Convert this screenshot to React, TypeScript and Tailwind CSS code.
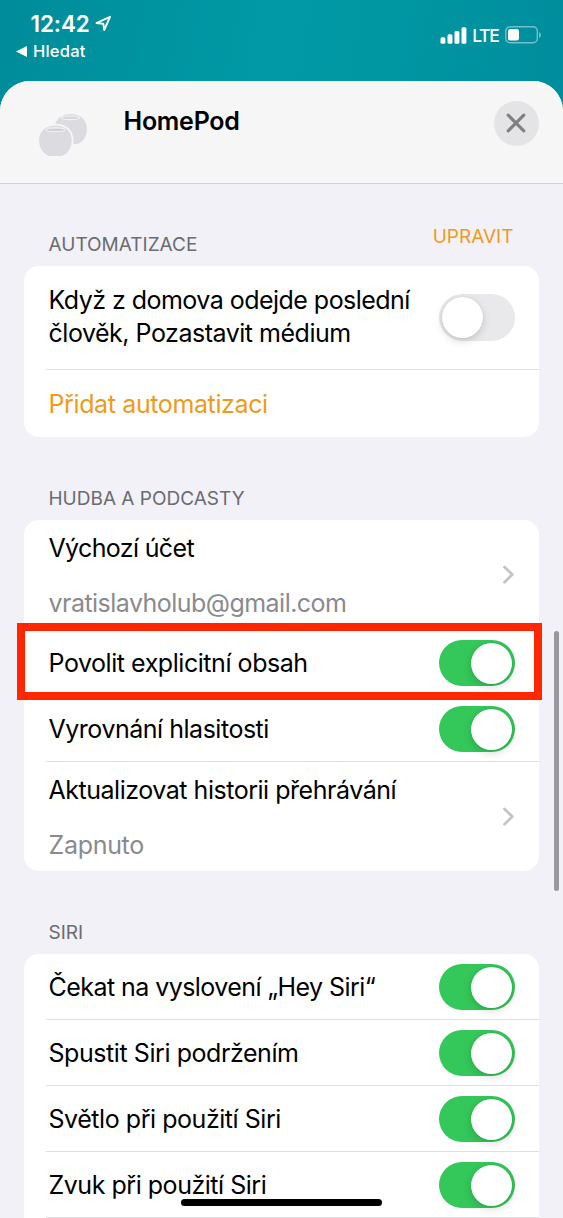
import type { ReactNode } from 'react'

function Toggle({ on }: { on: boolean }) {
  return (
    <div
      role="switch"
      aria-checked={on}
      className={
        on
          ? 'flex h-[46.5px] w-[76.5px] shrink-0 items-center justify-end rounded-full bg-[#34c759] px-[3px]'
          : 'flex h-[46.5px] w-[76.5px] shrink-0 items-center justify-start rounded-full bg-[#e9e9eb] px-[3px]'
      }
    >
      <div className="size-[41px] rounded-full bg-white shadow-[0_3px_8px_rgba(0,0,0,0.15),0_0_2px_rgba(0,0,0,0.1)]" />
    </div>
  )
}

function Chevron() {
  return (
    <svg className="shrink-0" width="12" height="20" viewBox="0 0 12 20" fill="none">
      <path d="M1.500 2 9.300 9.600 1.500 17.200" stroke="#c4c4c7" strokeWidth="2.800" strokeLinecap="round" strokeLinejoin="round" />
    </svg>
  )
}

function SwitchRow({ label, on = true }: { label: ReactNode; on?: boolean }) {
  return (
    <div className="ml-[22px] flex h-[66px] items-center justify-between border-b border-[#dfdfe2] pt-px pr-6 pl-[2.500px]">
      {label}
      <Toggle on={on} />
    </div>
  )
}

function DetailRow({ title, value }: { title: ReactNode; value: ReactNode }) {
  return (
    <div className="flex h-[109px] items-center justify-between pr-6 pl-[24.500px]">
      <div className="flex flex-col gap-[22px] pt-[2px]">
        {title}
        {value}
      </div>
      <Chevron />
    </div>
  )
}

function HomePodIcon() {
  return (
    <svg width="50" height="45" viewBox="0 0 50 45">
      <path d="M31.800 1C41 1 48 6.300 48 16c0 6.200-2.900 11.200-7.200 13.900C39.400 30.800 37.500 31 35 31h-7c-2.500 0-4.200-.3-5.500-1.100-4.200-2.700-7-7.700-7-13.900C15.500 6.300 22.500 1 31.800 1Z" fill="#dcdce0" />
      <ellipse cx="31.500" cy="4.800" rx="9" ry="1.800" fill="#d6d6db" stroke="#f3f3f5" strokeWidth="1.100" />
      <path d="M16.400 12.600c9.500 0 16.300 5.200 16.300 15 0 6.300-2.800 11.300-7.200 14.200-1.300.9-3 1.200-5.300 1.200h-7.600c-2.300 0-4-.3-5.300-1.200C2.900 38.900.1 33.900.1 27.600c0-9.800 6.800-15 16.300-15Z" fill="#dcdce0" stroke="#f6f6f7" strokeWidth="3.600" paintOrder="stroke" />
      <ellipse cx="16.400" cy="16.800" rx="9.300" ry="1.900" fill="#d0d0d6" stroke="#f3f3f5" strokeWidth="1.100" />
    </svg>
  )
}

function StatusBar() {
  return (
    <div className="flex h-[81px] items-start justify-between pr-[21px] pl-4 text-white">
      <div className="flex flex-col">
        <div className="mt-[9px] flex h-7 items-center pl-[14.500px]">
          <span className="text-[22.500px] font-semibold tracking-[-0.100px]">12:42</span>
          <svg className="ml-[5px]" width="17" height="17" viewBox="0 0 17 17" fill="none">
            <path d="M1.500 8 15 1.800 9.200 15 8.300 8.700Z" stroke="#fff" strokeWidth="1.900" strokeLinejoin="round" />
          </svg>
        </div>
        <div className="mt-px flex h-[26px] items-center">
          <svg width="11" height="11" viewBox="0 0 11 11">
            <path d="M0 5.500 11 0v11Z" fill="#fff" />
          </svg>
          <span className="ml-[6px] text-[16.500px] font-medium tracking-[0.200px]">Hledat</span>
        </div>
      </div>
      <div className="mt-[23px] flex h-6 items-center">
        <svg width="27" height="17" viewBox="0 0 27 17" fill="#fff">
          <rect x="0.500" y="10.300" width="4.900" height="6.500" rx="1.500" />
          <rect x="7.500" y="7.300" width="4.900" height="9.500" rx="1.500" />
          <rect x="14.500" y="4" width="4.900" height="12.800" rx="1.500" />
          <rect x="21.500" y="0.200" width="4.900" height="16.600" rx="1.500" />
        </svg>
        <span className="ml-[5px] text-[17.500px] font-medium tracking-[-1.300px]">LTE</span>
        <svg className="ml-[6.500px]" width="37" height="18" viewBox="0 0 37 18">
          <rect x="0.800" y="0.800" width="31.500" height="16" rx="4.300" fill="none" stroke="#fff" strokeOpacity="0.450" strokeWidth="1.400" />
          <rect x="3" y="3" width="11" height="11.600" rx="2.300" fill="#fff" />
          <path d="M34 6.200c2.600.6 2.600 5 0 5.600Z" fill="#fff" fillOpacity="0.450" />
        </svg>
      </div>
    </div>
  )
}

export default function App() {
  return (
    <div className="relative h-[1218px] w-[563px] overflow-hidden bg-[linear-gradient(100deg,#008c9a_0%,#0099a5_35%,#0097a3_50%,#00889a_85%,#008398_100%)] font-[Inter,sans-serif] text-[25px] leading-[33px] text-black">
      <StatusBar />
      <div className="h-[1137px] overflow-hidden rounded-t-[30px] bg-[#f2f1f7]">
        <header className="flex h-[103px] items-start border-b border-[#d2d2d5] bg-[#f6f6f7] pr-[24.500px] pl-[39px]">
          <div className="mt-[32px]">
            <HomePodIcon />
          </div>
          <h1 className="mt-[24px] ml-[34.500px] flex-1 text-[25px] font-semibold tracking-[-0.250px]">HomePod</h1>
          <div className="mt-[19.500px] flex size-[45px] items-center justify-center rounded-full bg-[#e4e4e7]">
            <svg width="20" height="20" viewBox="0 0 20 20">
              <path d="M2.200 2.200 17.800 17.800M17.800 2.200 2.200 17.800" stroke="#7f7f84" strokeWidth="3.100" strokeLinecap="round" />
            </svg>
          </div>
        </header>

        <main className="px-6">
          <div className="flex h-[82px] items-start justify-between pr-[25.500px] pl-[24.500px] text-[19px]">
            <h2 className="mt-[44px] text-[#6b6b70]">AUTOMATIZACE</h2>
            <span className="mt-[36px] text-[#f09a1a]">UPRAVIT</span>
          </div>
          <section className="h-[171px] rounded-[15px] bg-white">
            <div className="ml-[22px] flex h-[104px] items-center justify-between border-b border-[#dfdfe2] pr-6 pl-[2.500px]">
              <p className="pb-[2px] whitespace-nowrap">
                <span className="block tracking-[-0.530px]">Když z domova odejde poslední</span>
                <span className="block tracking-[-0.480px]">člověk, Pozastavit médium</span>
              </p>
              <Toggle on={false} />
            </div>
            <div className="flex h-[68px] items-center pl-[24.500px] text-[#f09a1a]">
              <span className="tracking-[-0.380px]">Přidat automatizaci</span>
            </div>
          </section>

          <h2 className="h-[83px] pt-[45px] pl-[24.500px] text-[19px] text-[#6b6b70]">HUDBA A PODCASTY</h2>
          <section className="h-[351px] rounded-[15px] bg-white">
            <DetailRow
              title={<span className="tracking-[-0.650px]">Výchozí účet</span>}
              value={<span className="tracking-[-0.530px] text-[#8a8a8e]">vratislavholub@gmail.com</span>}
            />
            <div className="relative pt-px">
              <SwitchRow label={<span className="tracking-[-0.450px]">Povolit explicitní obsah</span>} />
              <div className="absolute -top-[6px] -left-[7px] h-[77px] w-[525px] border-8 border-[#ff2600]" />
            </div>
            <SwitchRow label={<span className="tracking-[-0.480px]">Vyrovnání hlasitosti</span>} />
            <DetailRow
              title={<span className="tracking-[-0.470px]">Aktualizovat historii přehrávání</span>}
              value={<span className="tracking-[-0.300px] text-[#8a8a8e]">Zapnuto</span>}
            />
          </section>

          <h2 className="h-[83px] pt-[45px] pl-[24.500px] text-[19px] text-[#6b6b70]">SIRI</h2>
          <section className="rounded-t-[15px] bg-white">
            <SwitchRow label={<span className="tracking-[-0.550px]">Čekat na vyslovení „Hey Siri“</span>} />
            <SwitchRow label={<span className="tracking-[-0.430px]">Spustit Siri podržením</span>} />
            <SwitchRow label={<span className="tracking-[-0.450px]">Světlo při použití Siri</span>} />
            <SwitchRow label={<span className="tracking-[-0.470px]">Zvuk při použití Siri</span>} />
          </section>
        </main>
      </div>
      <div className="absolute top-[631px] left-[554px] h-[260px] w-[4.500px] rounded-full bg-[#99989e]" />
      <div className="absolute top-[1198.500px] left-[181px] h-[7.500px] w-[201px] rounded-full bg-black" />
    </div>
  )
}
